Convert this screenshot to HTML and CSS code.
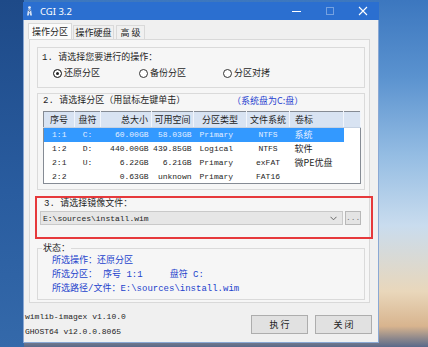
FILE: index.html
```html
<!DOCTYPE html>
<html lang="zh-CN">

<head>
    <meta charset="UTF-8">
    <meta name="viewport" content="width=device-width, initial-scale=1.0">
    <title>CGI 3.2</title>
    <link rel="stylesheet" href="styles.css">
</head>

<body>
    <div class="window">
        <div class="titlebar">
            <svg class="app-icon" width="7" height="10" viewBox="0 0 7 10">
                <circle cx="3.5" cy="1.6" r="1.4" fill="#e8eef8"/>
                <path d="M2 3.5 L5 3.5 L6 9.5 L4.2 9.5 L3.5 6 L2.8 9.5 L1 9.5 Z" fill="#d6e2f4"/>
                <path d="M2.4 4 L3.5 5.6 L4.6 4" stroke="#1d3f78" stroke-width="0.8" fill="none"/>
            </svg>
            <span class="title">CGI 3.2</span>
            <div class="controls">
                <span class="ctl"><span class="min"></span></span>
                <span class="ctl"><span class="max"></span></span>
                <span class="ctl">
                    <svg width="10" height="10" viewBox="0 0 10 10">
                        <path d="M1 1 L9 9 M9 1 L1 9" stroke="#fff" stroke-width="1.1"/>
                    </svg>
                </span>
            </div>
        </div>

        <div class="tabs">
            <div class="tab active">操作分区</div>
            <div class="tab">操作硬盘</div>
            <div class="tab narrow">高 级</div>
        </div>

        <div class="tabpage">
            <div class="group ops">
                <div class="label mix">1. 请选择您要进行的操作：</div>
                <div class="radios">
                    <label class="radio"><span class="dot checked"></span>还原分区</label>
                    <label class="radio"><span class="dot"></span>备份分区</label>
                    <label class="radio"><span class="dot"></span>分区对拷</label>
                </div>
            </div>

            <div class="group parts">
                <div class="label-row mix">
                    <span>2. 请选择分区（用鼠标左键单击）</span>
                    <span class="hint">（系统盘为C:盘）</span>
                </div>
                <table class="list">
                    <colgroup>
                        <col class="w31"><col class="w26"><col class="w51"><col class="w42">
                        <col class="w53"><col class="w43"><col class="w54"><col class="w17">
                    </colgroup>
                    <thead>
                        <tr>
                            <th>序号</th>
                            <th>盘符</th>
                            <th class="right">总大小</th>
                            <th>可用空间</th>
                            <th>分区类型</th>
                            <th>文件系统</th>
                            <th class="left">卷标</th>
                            <th></th>
                        </tr>
                    </thead>
                    <tbody>
                        <tr class="selected">
                            <td>1:1</td><td>C:</td><td class="size">60.00GB</td><td class="free">58.03GB</td>
                            <td class="type">Primary</td><td>NTFS</td><td class="label-cell">系统</td><td class="blank"></td>
                        </tr>
                        <tr>
                            <td>1:2</td><td>D:</td><td class="size">440.00GB</td><td class="free">439.85GB</td>
                            <td class="type">Logical</td><td>NTFS</td><td class="label-cell">软件</td><td class="blank"></td>
                        </tr>
                        <tr>
                            <td>2:1</td><td>U:</td><td class="size">6.22GB</td><td class="free">6.21GB</td>
                            <td class="type">Primary</td><td>exFAT</td><td class="label-cell">微PE优盘</td><td class="blank"></td>
                        </tr>
                        <tr>
                            <td>2:2</td><td></td><td class="size">0.63GB</td><td class="free">unknown</td>
                            <td class="type">Primary</td><td>FAT16</td><td class="label-cell"></td><td class="blank"></td>
                        </tr>
                    </tbody>
                </table>
            </div>

            <div class="group pick">
                <div class="label mix">3. 请选择镜像文件：</div>
                <div class="file-row">
                    <div class="combo">
                        <span class="path">E:\sources\install.wim</span>
                        <svg width="7" height="5" viewBox="0 0 7 5">
                            <path d="M0.5 0.8 L3.5 3.8 L6.5 0.8" stroke="#666" stroke-width="1" fill="none"/>
                        </svg>
                    </div>
                    <button class="browse">...</button>
                </div>
            </div>

            <fieldset class="status">
                <legend>状态：</legend>
                <div class="line mix">所选操作：还原分区</div>
                <div class="line mix">所选分区：<span class="num">序号 1:1</span><span class="drive">盘符 C:</span></div>
                <div class="line mix">所选路径/文件：E:\sources\install.wim</div>
            </fieldset>
        </div>

        <div class="footer">
            <div class="versions">
                <div>wimlib-imagex v1.10.0</div>
                <div>GHOST64 v12.0.0.8065</div>
            </div>
            <div class="buttons">
                <button>执 行</button>
                <button>关 闭</button>
            </div>
        </div>
    </div>
</body>

</html>
```

FILE: styles.css
```css
* {
    box-sizing: border-box;
}

body {
    margin: 0;
    width: 428px;
    height: 347px;
    overflow: hidden;
    background:
        linear-gradient(180deg, #1e4a88 0%, #295c9f 55%, #3469aa 100%) left top / 24px 100% no-repeat,
        linear-gradient(180deg, #3c77bf 0%, #5a92cf 22%, #95bde3 45%, #c9dcee 65%, #e9d7bb 84%, #d8b48e 94%, #59698a 100%);
    font-family: "Noto Sans CJK SC", sans-serif;
    font-size: 9px;
    color: #1e1e1e;
}

.mix {
    font-family: "Liberation Mono", "Noto Sans CJK SC", monospace;
}

.window {
    margin: 2px 0 0 23px;
    width: 356px;
    height: 341px;
    background: #f0f0f0;
    border: 1px solid #8aa8d4;
    border-top: none;
}

/* title bar */
.titlebar {
    height: 18px;
    margin: 0 -1px;
    background: #2b6fd0;
    display: flex;
    align-items: center;
    color: #fff;
}

.app-icon {
    margin-left: 3px;
}

.title {
    margin-left: 7px;
    font-family: "Noto Sans", sans-serif;
    font-size: 9.5px;
}

.controls {
    margin-left: auto;
    display: flex;
    height: 100%;
}

.ctl {
    width: 33px;
    display: flex;
    align-items: center;
    justify-content: center;
}

.min {
    width: 9px;
    height: 1px;
    background: #fff;
}

.max {
    width: 8px;
    height: 8px;
    border: 1px solid rgba(255, 255, 255, 0.35);
}

/* tabs */
.tabs {
    height: 19px;
    padding-left: 4px;
    display: flex;
    align-items: flex-end;
}

.tab {
    width: 41px;
    height: 14px;
    line-height: 13px;
    text-align: center;
    border: 1px solid #d9d9d9;
    border-bottom: none;
    background: #f0f0f0;
    margin-left: 1px;
}

.tab.active {
    width: 44px;
    height: 16px;
    line-height: 15px;
    margin-left: 0;
    background: #fbfbfb;
}

.tab.narrow {
    width: 29px;
    margin-left: 2px;
}

.tabpage {
    margin-left: 5px;
    width: 341px;
    height: 264px;
    background: #f6f6f6;
    border: 1px solid #d9d9d9;
    padding: 7px 4px 0 7px;
}

/* group boxes */
.group {
    border: 1px solid #dadada;
}

.label,
.label-row {
    line-height: 12px;
}

.ops {
    height: 41px;
    padding: 4px 0 0 4px;
}

.radios {
    margin-top: 3px;
    padding-left: 11px;
    display: grid;
    grid-template-columns: 86px 84px auto;
    line-height: 12px;
}

.radio {
    display: flex;
    align-items: center;
    gap: 2px;
}

.dot {
    width: 9px;
    height: 9px;
    border-radius: 50%;
    border: 1px solid #333;
    background: #fff;
}

.dot.checked {
    background: #222;
    box-shadow: inset 0 0 0 2px #fff;
}

.parts {
    margin-top: 5px;
    height: 97px;
    padding: 1px 4px 0 5px;
}

.label-row {
    display: grid;
    grid-template-columns: 189px auto;
}

.hint {
    color: #1f3fd0;
    font-family: "Noto Sans CJK SC", sans-serif;
}

/* partition list */
.list {
    margin-top: 4px;
    width: 317px;
    table-layout: fixed;
    border-collapse: collapse;
    border: 1px solid #858b94;
    background: #fff;
}

.w31 { width: 31px; }
.w26 { width: 26px; }
.w51 { width: 51px; }
.w42 { width: 42px; }
.w53 { width: 53px; }
.w43 { width: 43px; }
.w54 { width: 54px; }
.w17 { width: 17px; }

.list th {
    height: 16px;
    padding: 0;
    font-weight: normal;
    background: #d8e3f2;
    border-right: 1px solid #f1f5fb;
    border-bottom: 1px solid #c6d2e2;
    white-space: nowrap;
    overflow: hidden;
}

.list th.right {
    text-align: right;
    padding-right: 3px;
}

.list th.left {
    text-align: left;
    padding-left: 5px;
}

.list td {
    height: 14px;
    padding: 0;
    text-align: center;
    font-family: "Liberation Mono", monospace;
    font-size: 8px;
    white-space: nowrap;
    overflow: hidden;
}

.list td.size {
    text-align: right;
    padding-right: 3px;
}

.list td.free {
    text-align: right;
    padding-right: 2px;
}

.list td.type {
    text-align: left;
    padding-left: 6px;
}

.list td.label-cell {
    text-align: left;
    padding-left: 5px;
    font-family: "Noto Sans CJK SC", sans-serif;
    font-size: 9px;
}

.list tr.selected td {
    background: #3399ff;
    color: #e4efff;
}

.list tr.selected td.blank {
    background: #fff;
}

/* image file */
.pick {
    margin: 6px -8px 0 -2px;
    height: 43px;
    border: 2px solid #e6393b;
    padding-left: 3px;
}

.pick .label {
    padding-left: 4px;
}

.file-row {
    margin-top: 1px;
    display: flex;
    gap: 2px;
}

.combo {
    width: 303px;
    height: 14px;
    border: 1px solid #c9c9c9;
    background: #e6e6e6;
    display: flex;
    align-items: center;
    padding: 0 5px 0 2px;
}

.path {
    font-family: "Liberation Mono", monospace;
    font-size: 8px;
}

.combo svg {
    margin-left: auto;
}

.browse {
    width: 16px;
    height: 14px;
    padding: 0;
    border: 1px solid #b8b8b8;
    background: #e4e4e4;
    color: #777;
    font-family: "Liberation Mono", monospace;
    font-size: 8px;
    line-height: 8px;
}

/* status */
.status {
    margin: 3px 0 0;
    padding: 0 0 3px 14px;
    min-width: 0;
    border: 1px solid #dadada;
}

.status legend {
    margin-left: -10px;
    padding: 0 1px;
    line-height: 12px;
}

.status .line {
    line-height: 14px;
    color: #2342cc;
}

.num {
    margin-left: 6px;
}

.drive {
    margin-left: 27px;
}

/* footer */
.footer {
    display: flex;
    padding: 6px 6px 0 1px;
}

.versions {
    font-family: "Liberation Mono", monospace;
    font-size: 8px;
    line-height: 15px;
}

.buttons {
    margin-left: auto;
    margin-top: 6px;
    display: flex;
    gap: 7px;
}

.buttons button {
    width: 57px;
    height: 19px;
    padding: 0;
    border: 1px solid #adadad;
    background: #e1e1e1;
    font-family: "Noto Sans CJK SC", sans-serif;
    font-size: 9px;
    color: #222;
}
```
